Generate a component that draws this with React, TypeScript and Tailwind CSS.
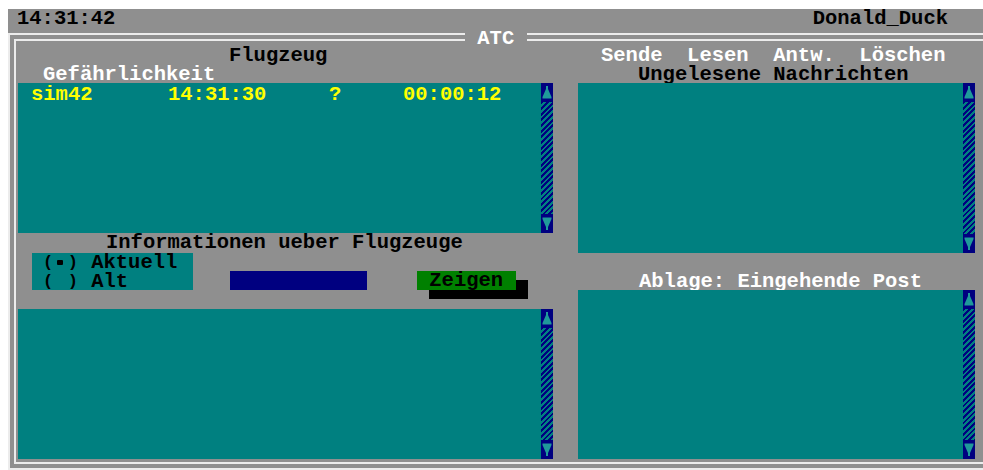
import React from 'react';

// DOS-style text mode colours
const GRAY = 'bg-[#8f8f8f]';
const TEAL = 'bg-[#008080]';

const ArrowUp: React.FC = () => (
    <svg width="12" height="19" viewBox="0 0 12 19" className="block">
        <path d="M5 3 H7 V6 L10.5 14 V15.5 H1.5 V14 L5 6 Z" fill="#1f9a9a" />
    </svg>
);

const ArrowDown: React.FC = () => (
    <svg width="12" height="19" viewBox="0 0 12 19" className="block">
        <path d="M1.5 3.5 H10.5 V5 L7 13 V16 H5 V13 L1.5 5 Z" fill="#1f9a9a" />
    </svg>
);

const ScrollBar: React.FC = () => (
    <div className="w-[12px] flex flex-col bg-[#000080] shrink-0">
        <ArrowUp />
        <div className="flex-1 bg-[repeating-linear-gradient(135deg,#000080_0px,#000080_2px,#008080_2px,#008080_4px)]" />
        <ArrowDown />
    </div>
);

const ListBox: React.FC<{ height: string; children?: React.ReactNode }> = ({ height, children }) => (
    <div className={`${TEAL} ${height} flex`}>
        <div className="flex-1 min-w-0">{children}</div>
        <ScrollBar />
    </div>
);

// radio marker "( )" drawn cell by cell so the parens stay inside one text row
const Radio: React.FC<{ checked?: boolean }> = ({ checked }) => (
    <span className="inline-flex items-center h-[19px] align-top">
        <span className="w-[12.3px] text-center text-[17px] leading-[19px]">(</span>
        <span className="w-[12.3px] flex items-center justify-center">
            {checked && <span className="w-[6px] h-[5px] bg-black rounded-[1px]" />}
        </span>
        <span className="w-[12.3px] text-center text-[17px] leading-[19px]">)</span>
    </span>
);

export default function App() {
    return (
        <div className="w-[983px] h-[470px] overflow-hidden bg-white pl-[8px] pt-[9px] [font-family:'Liberation_Mono','DejaVu_Sans_Mono',monospace] text-[20.5px] font-bold leading-[19px] whitespace-pre">
            <div className={`${GRAY} w-[975px] h-[461px] flex flex-col`}>
                {/* status line */}
                <div className="h-[24px] flex justify-between pl-[9px] pr-[35px] text-black">
                    <span>14:31:42</span>
                    <span>Donald_Duck</span>
                </div>

                {/* double frame */}
                <div className="border-l-2 border-t-2 border-b-2 border-[#ececec] pl-[4px] pt-[4px] pb-[4px] w-[975px] shrink-0">
                    <div className="relative border-l-2 border-t-2 border-b-2 border-[#ececec] h-[425px] flex pl-[2px]">
                        <span className="absolute left-[449px] top-[-12px] h-[19px] bg-[#8f8f8f] text-white"> ATC </span>

                        {/* left column: aircraft */}
                        <div className="w-[535px] flex flex-col">
                            <div className="h-[42px] pt-[5px]">
                                <div className="pl-[211px] text-black">Flugzeug</div>
                                <div className="pl-[25px] text-white h-[18px]">Gefährlichkeit</div>
                            </div>
                            <ListBox height="h-[150px]">
                                <div className="pt-[2px] pl-[13px] text-[#ffff00] flex">
                                    <span className="w-[137px]">sim42</span>
                                    <span className="w-[161px]">14:31:30</span>
                                    <span className="w-[74px]">?</span>
                                    <span>00:00:12</span>
                                </div>
                            </ListBox>

                            <div className="h-[76px]">
                                <div className="pl-[88px] text-black">Informationen ueber Flugzeuge</div>
                                <div className="flex items-start pl-[14px] pt-[1px]">
                                    <div className={`${TEAL} w-[161px] h-[37px] pl-[10px] text-black`}>
                                        <div className="h-[19px]"><Radio checked /> Aktuell</div>
                                        <div className="h-[18px]"><Radio /> Alt</div>
                                    </div>
                                    <div className="ml-[37px] mt-[18px] w-[137px] h-[19px] bg-[#000080]" />
                                    <button className="ml-[50px] mt-[18px] w-[99px] h-[19px] bg-[#008000] text-black text-left shadow-[12px_9px_0_0_#000]">
                                        {' '}Zeigen
                                    </button>
                                </div>
                            </div>

                            <ListBox height="h-[150px]" />
                        </div>

                        {/* right column: mail */}
                        <div className="w-[397px] ml-[25px] flex flex-col">
                            <div className="h-[42px] pt-[5px]">
                                <div className="pl-[23px] text-white">Sende  Lesen  Antw.  Löschen</div>
                                <div className="pl-[60px] text-black h-[18px]">Ungelesene Nachrichten</div>
                            </div>
                            <ListBox height="h-[170px]" />
                            <div className="h-[37px] pt-[19px] pl-[61px] text-white">Ablage: Eingehende Post</div>
                            <ListBox height="h-[169px]" />
                        </div>
                    </div>
                </div>
            </div>
        </div>
    );
}
